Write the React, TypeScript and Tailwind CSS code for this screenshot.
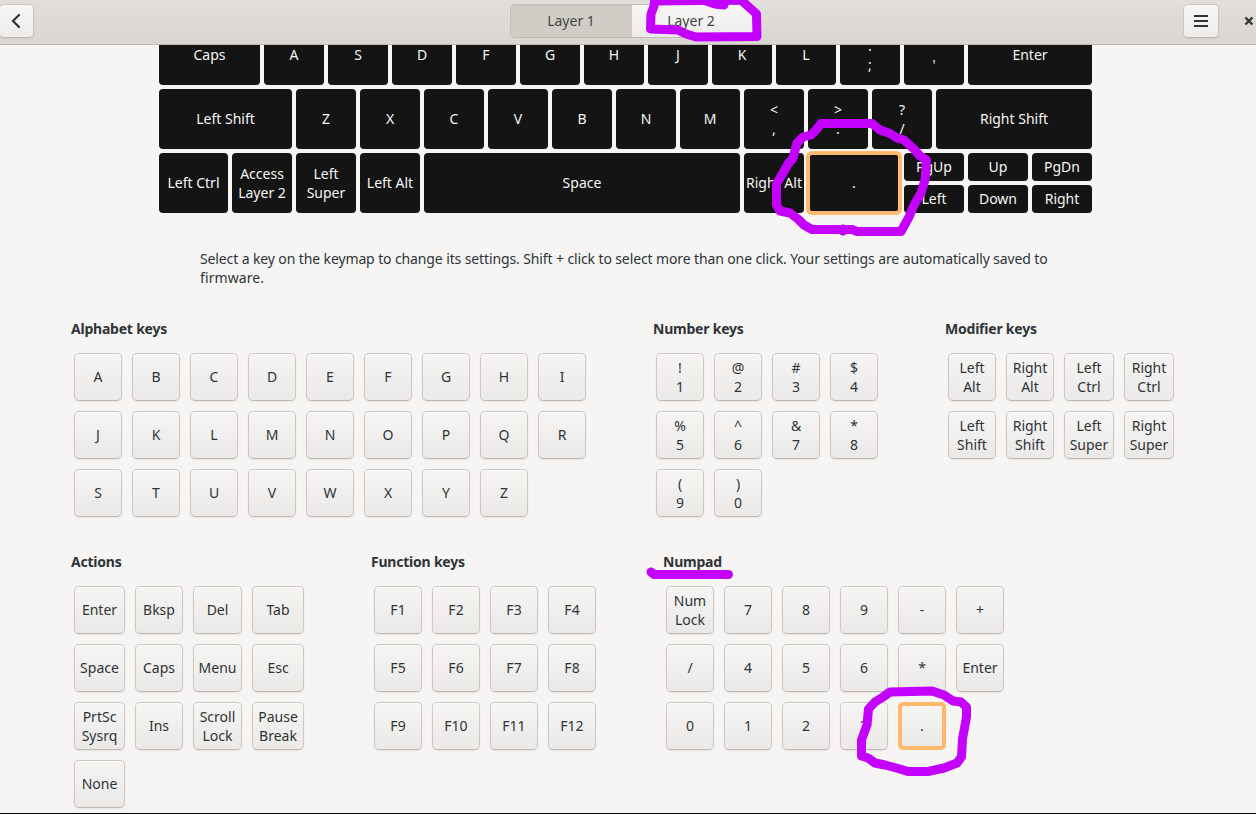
import React from "react";

type SectionProps = { title: string; cols: string; keys: string[]; selected?: string };

const lower = [
  ["Left Ctrl", "w-[69px]"],
  ["Access\nLayer 2", "w-[60px]"],
  ["Left\nSuper", "w-[60px]"],
  ["Left Alt", "w-[60px]"],
  ["Space", "w-[316px]"],
  ["Right Alt", "w-[60px]"],
];

function DarkKey({ label, size = "w-[60px] h-[60px]" }: { label: string; size?: string }) {
  return (
    <div
      className={`${size} ${label.includes("\n") ? "" : "pb-0.5"} flex shrink-0 items-center justify-center whitespace-pre rounded-[4px] bg-[#141414] text-center text-[#f6f5f4]`}
    >
      {label}
    </div>
  );
}

function Section({ title, cols, keys, selected }: SectionProps) {
  return (
    <section>
      <h2 className="h-[19px] font-bold tracking-[-0.22px]">{title}</h2>
      <div className={`ml-[3px] mt-[15px] grid gap-[10px] ${cols}`}>
        {keys.map((k) => (
          <button
            key={k}
            className={`flex h-12 items-center justify-center whitespace-pre rounded-[5px] bg-linear-to-b from-[#f6f5f4] to-[#ebe9e8] text-center ${
              k.includes("\n") ? "" : "pb-0.5"
            } ${
              k === selected
                ? "border-4 border-[#ffb86c]"
                : "border border-[#cdc7c2] border-b-[#bfb8b1] shadow-[0_1px_2px_rgba(0,0,0,0.07),inset_0_1px_#fff]"
            }`}
          >
            {k}
          </button>
        ))}
      </div>
    </section>
  );
}

export default function App() {
  return (
    <div className="relative flex h-[814px] w-[1256px] flex-col overflow-hidden border-b border-black bg-[#f6f5f4] font-['Noto_Sans',sans-serif] text-[14px] leading-[19px] text-[#2e3436]">
      <header className="z-10 flex h-[45px] shrink-0 items-start justify-between border-b border-[#bfb8b1] bg-linear-to-b from-[#e1dedb] to-[#dad6d2] pt-1">
        <button className="-ml-px flex h-[34px] w-[35px] items-center justify-center rounded-[5px] border border-[#cdc7c2] border-b-[#bfb8b1] bg-linear-to-b from-[#f8f7f6] to-[#edebe9] shadow-[0_1px_2px_rgba(0,0,0,0.07)]">
          <svg width="16" height="16" viewBox="0 0 16 16" className="-ml-px" fill="none" stroke="#2e3436" strokeWidth="2.2" strokeLinecap="round">
            <path d="M11 2 L5 8 L11 14" />
          </svg>
        </button>
        <div className="ml-[46px] flex h-[34px] w-[244px] overflow-hidden rounded-[5px] border border-[#c6bfb9] border-b-[#bfb8b1]">
          <button className="w-[121px] bg-[#d1ccc6] pb-0.5 text-[#414648] shadow-[inset_0_1px_1px_rgba(0,0,0,0.06)]">Layer 1</button>
          <button className="flex-1 bg-linear-to-b from-[#f8f7f6] to-[#edebe9] pb-0.5 pr-[2px] text-[#414648]">Layer 2</button>
        </div>
        <div className="flex h-[34px] items-center gap-[24px]">
          <button className="flex h-[34px] w-9 items-center justify-center rounded-[5px] border border-[#cdc7c2] border-b-[#bfb8b1] bg-linear-to-b from-[#f8f7f6] to-[#edebe9] shadow-[0_1px_2px_rgba(0,0,0,0.07)]">
            <svg width="14" height="12" viewBox="0 0 14 12" fill="#2e3436">
              <path d="M0 0h14v2H0zM0 5h14v2H0zM0 10h14v2H0z" />
            </svg>
          </button>
          <svg width="13" height="10" viewBox="0 0 13 10" fill="none" stroke="#2e3436" strokeWidth="2.4">
            <path d="M2.4 1.5 L9.4 8.5 M9.4 1.5 L2.4 8.5" />
          </svg>
        </div>
      </header>

      <div className="-mt-5 ml-[159px] flex w-[933px] shrink-0 flex-col gap-1">
        <div className="flex gap-1">
          <DarkKey label="Caps" size="w-[101px] h-[60px]" />
          {["A", "S", "D", "F", "G", "H", "J", "K", "L", ":\n;", "\"\n'"].map((k) => (
            <DarkKey key={k} label={k} />
          ))}
          <DarkKey label="Enter" size="w-[124px] h-[60px]" />
        </div>
        <div className="flex gap-1">
          <DarkKey label="Left Shift" size="w-[133px] h-[60px]" />
          {["Z", "X", "C", "V", "B", "N", "M", "<\n,", ">\n.", "?\n/"].map((k) => (
            <DarkKey key={k} label={k} />
          ))}
          <DarkKey label="Right Shift" size="w-[156px] h-[60px]" />
        </div>
        <div className="flex gap-1">
          {lower.map(([label, width]) => (
            <DarkKey key={label} label={label} size={`${width} h-[60px]`} />
          ))}
          <div className="-mx-0.5 -my-0.5 flex h-16 w-24 items-center justify-center rounded-[6px] border-4 border-[#ffb86c] bg-[#141414] pb-0.5 text-[#f6f5f4]">.</div>
          <div className="grid grid-cols-[60px_60px_60px] gap-1">
            {["PgUp", "Up", "PgDn", "Left", "Down", "Right"].map((k) => (
              <DarkKey key={k} label={k} size="w-[60px] h-[28px]" />
            ))}
          </div>
        </div>
      </div>

      <p className="ml-[200px] mt-[36px] shrink-0 whitespace-nowrap tracking-[-0.117px]">
        Select a key on the keymap to change its settings. Shift + click to select more than one click. Your settings are automatically saved to
        <br />
        <span className="tracking-[0.1px]">firmware.</span>
      </p>

      <div className="ml-[71px] mt-[32px] grid shrink-0 grid-cols-[582px_292px_240px]">
        <Section title="Alphabet keys" cols="grid-cols-[repeat(9,48px)]" keys={"ABCDEFGHIJKLMNOPQRSTUVWXYZ".split("")} />
        <Section
          title="Number keys"
          cols="grid-cols-[repeat(4,48px)]"
          keys={["!\n1", "@\n2", "#\n3", "$\n4", "%\n5", "^\n6", "&\n7", "*\n8", "(\n9", ")\n0"]}
        />
        <Section
          title="Modifier keys"
          cols="grid-cols-[48px_48px_50px_50px]"
          keys={["Left\nAlt", "Right\nAlt", "Left\nCtrl", "Right\nCtrl", "Left\nShift", "Right\nShift", "Left\nSuper", "Right\nSuper"]}
        />
      </div>
      <div className="ml-[71px] mt-[35px] grid shrink-0 grid-cols-[300px_292px_360px]">
        <Section
          title="Actions"
          cols="grid-cols-[51px_48px_49px_52px]"
          keys={["Enter", "Bksp", "Del", "Tab", "Space", "Caps", "Menu", "Esc", "PrtSc\nSysrq", "Ins", "Scroll\nLock", "Pause\nBreak", "None"]}
        />
        <Section
          title="Function keys"
          cols="grid-cols-[repeat(4,48px)]"
          keys={["F1", "F2", "F3", "F4", "F5", "F6", "F7", "F8", "F9", "F10", "F11", "F12"]}
        />
        <Section
          title="Numpad"
          cols="grid-cols-[repeat(6,48px)]"
          selected="."
          keys={["Num\nLock", "7", "8", "9", "-", "+", "/", "4", "5", "6", "*", "Enter", "0", "1", "2", "3", "."]}
        />
      </div>

      <svg className="pointer-events-none absolute left-0 top-0 z-20" width="1256" height="814" fill="none" stroke="#c400ff" strokeWidth="9" strokeLinecap="round" strokeLinejoin="round">
        <path d="M655 -2 L654 6 L651 14 L650.5 29 L678 30 L686 34 L696 37 L757 36.5 L756.5 14 L741 0 L657 1 M706 1 L715 4 L724 5" />
        <path d="M821 123.5 H872 L880 130 L889 133 L897 138 L904 140 L915 150 L920 156 L926.5 160 L925 180 L921 193 L914 205 L909 217 L901 231.5 H857 L852 229.5 H812 L804 225 L798 219 L790 213 L780 211 L776.5 205 V184 L783 173 L788 164 L793 158 L797 143 L803 137 L811 135 L816 130 Z M843 229 V231" />
        <path d="M651 572 L654 574.5 H728.5" />
        <path d="M890 692 L932 691 L944 695 L953 701 L961 702 L966.5 707 L966.5 717 L962.5 739 L961.5 757 L957 763 L944 768 L928 771.5 H908 L900 769 L885 765 L875 763 L868 758 L861.5 756 V740 L867 725 L868.5 709 L875 702 L883 697 Z" />
      </svg>
    </div>
  );
}
